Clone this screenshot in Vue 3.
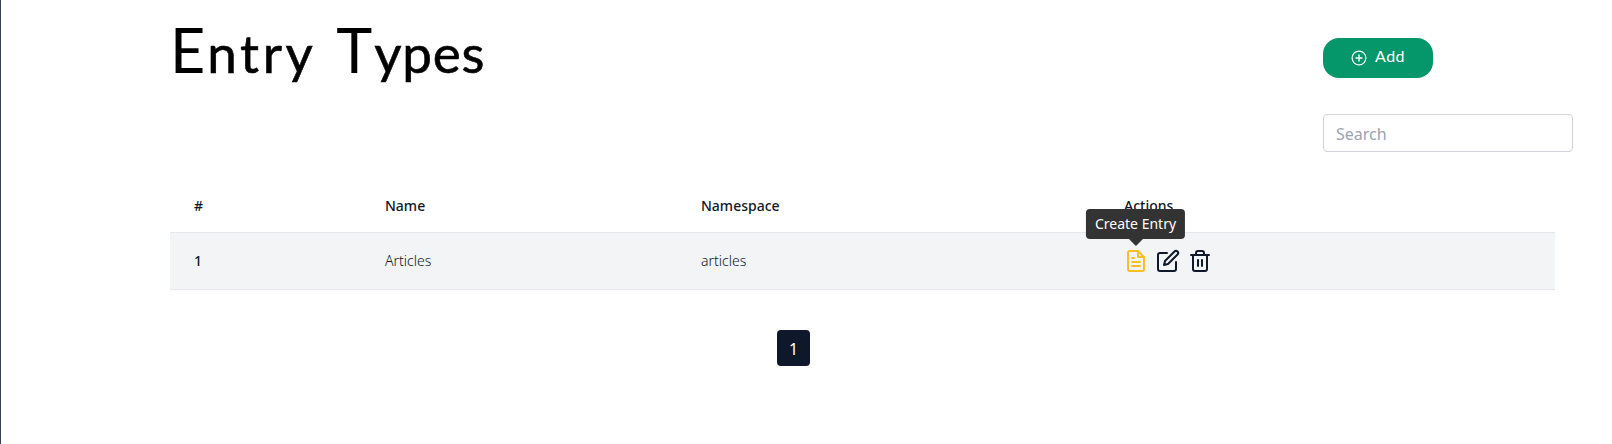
<script setup>
import { ref } from 'vue'

const search = ref('')
const entryTypes = [{ id: 1, name: 'Articles', namespace: 'articles' }]
</script>

<template>
  <div class="page">
    <header class="top">
      <h1 class="title">E<span class="first">ntry</span> T<span>ypes</span></h1>
      <div class="tools">
        <button class="add" type="button">
          <svg width="16" height="16" viewBox="0 0 16 16" fill="none" stroke="currentColor" stroke-width="1.2" stroke-linecap="round">
            <circle cx="8" cy="8" r="6.9" />
            <path d="M8 5v6M5 8h6" stroke-width="1.4" />
          </svg>
          <span class="add-label">Add</span>
        </button>
        <input v-model="search" class="search" type="text" placeholder="Search" />
      </div>
    </header>

    <table class="table">
      <colgroup>
        <col class="c-id" /><col class="c-name" /><col class="c-space" /><col />
      </colgroup>
      <thead>
        <tr><th>#</th><th>Name</th><th>Namespace</th><th>Actions</th></tr>
      </thead>
      <tbody>
        <tr v-for="entry in entryTypes" :key="entry.id">
          <td class="id">{{ entry.id }}</td>
          <td>{{ entry.name }}</td>
          <td>{{ entry.namespace }}</td>
          <td>
            <div class="actions">
              <span class="create">
                <svg class="icon" viewBox="0 0 24 24">
                  <path d="M14 2H6a2 2 0 0 0-2 2v16a2 2 0 0 0 2 2h12a2 2 0 0 0 2-2V8z" />
                  <path d="M14 2v6h6M16 13H8M16 17H8M10 9H8" />
                </svg>
                <span class="tip">Create Entry</span>
              </span>
              <svg class="icon" viewBox="0 0 24 24">
                <path d="M11 4H4a2 2 0 0 0-2 2v14a2 2 0 0 0 2 2h14a2 2 0 0 0 2-2v-7" />
                <path d="M18.5 2.5a2.121 2.121 0 0 1 3 3L12 15l-4 1 1-4z" />
              </svg>
              <svg class="icon" viewBox="0 0 24 24">
                <path d="M3 6h18M19 6v14a2 2 0 0 1-2 2H7a2 2 0 0 1-2-2V6M8 6V4a2 2 0 0 1 2-2h4a2 2 0 0 1 2 2v2" />
                <path d="M10 11v6M14 11v6" />
              </svg>
            </div>
          </td>
        </tr>
      </tbody>
    </table>

    <nav class="pages"><button class="page-button" type="button">1</button></nav>
  </div>
</template>

<style>
body { background: #fff; }
</style>

<style scoped>
.page {
  box-sizing: border-box;
  height: 444px;
  overflow: hidden;
  border-left: 1px solid #334155;
  padding: 0 39px 0 169px;
  font-family: "Noto Sans", sans-serif;
  color: #0f172a;
}
.top {
  display: flex;
  justify-content: space-between;
  height: 180px;
}
.title {
  margin: 14px 0 0;
  font: 400 61px/72px Lato, sans-serif;
  letter-spacing: 2px;
  word-spacing: 4px;
  white-space: nowrap;
  color: #000;
}
.title span {
  font-size: 53px;
  letter-spacing: 0.7px;
  -webkit-text-stroke: 0.6px #000;
}
.title .first { letter-spacing: 3.6px; }
.tools { width: 250px; padding-top: 38px; }
.add {
  display: flex;
  align-items: center;
  width: 110px;
  height: 40px;
  padding: 0 0 0 28px;
  border: 0;
  border-radius: 16px;
  background: #059669;
  color: #fff;
}
.add svg { flex: none; }
.add-label {
  margin: -4px 0 0 8px;
  font: 400 16px/24px Lato, sans-serif;
  letter-spacing: 0.5px;
}
.search {
  display: block;
  box-sizing: border-box;
  width: 250px;
  height: 38px;
  margin-top: 36px;
  padding: 2px 12px 0;
  border: 1px solid #d1d5db;
  border-radius: 4px;
  font: 400 16px/24px "Noto Sans", sans-serif;
}
.search::placeholder { color: #9ca3af; }
.table {
  width: 1385px;
  table-layout: fixed;
  border-collapse: separate;
  border-spacing: 0;
  font-size: 14px;
  line-height: 20px;
}
.c-id { width: 191px; }
.c-name { width: 316px; }
.c-space { width: 423px; }
th, td {
  padding: 16px 24px;
  border-bottom: 1px solid #e5e7eb;
  text-align: left;
}
th { font-weight: 500; }
td { background: #f3f4f6; font-weight: 300; }
.id { font-weight: 500; }
.actions { display: flex; gap: 8px; }
.icon {
  display: block;
  width: 24px;
  height: 24px;
  fill: none;
  stroke: currentColor;
  stroke-width: 2;
  stroke-linecap: round;
  stroke-linejoin: round;
}
.create { position: relative; color: #fbbf24; }
.tip {
  position: absolute;
  bottom: 34px;
  left: 50%;
  box-sizing: border-box;
  height: 30px;
  padding: 5px 9px;
  transform: translateX(calc(-50% - 0.5px));
  border-radius: 4px;
  background: #333;
  color: #fff;
  font-weight: 400;
  white-space: nowrap;
}
.tip::after {
  content: "";
  position: absolute;
  top: 100%;
  left: 50%;
  margin-left: -7px;
  border: 7px solid transparent;
  border-top-color: #333;
  border-bottom: 0;
}
.pages {
  display: flex;
  justify-content: center;
  width: 1247px;
  margin-top: 40px;
}
.page-button {
  width: 33px;
  height: 36px;
  padding: 2px 0 0;
  border: 0;
  border-radius: 4px;
  background: #0f172a;
  color: #fff;
  font: 400 16px/24px "Noto Sans", sans-serif;
}
</style>
